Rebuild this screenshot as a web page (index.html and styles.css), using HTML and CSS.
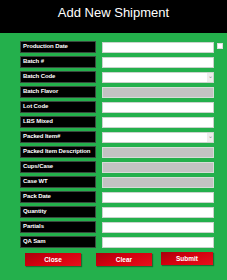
FILE: index.html
```html
<!DOCTYPE html>
<html>
<head>
<meta charset="utf-8">
<link rel="stylesheet" href="styles.css">
</head>
<body>
<header class="top">Add New Shipment</header>
<main class="panel">
  <div class="form">
    <div class="lbl">Production Date</div>
    <div class="fld"><input class="inp" type="text"><span class="cal"></span></div>
    <div class="lbl">Batch #</div>
    <div class="fld"><input class="inp" type="text"></div>
    <div class="lbl">Batch Code</div>
    <div class="fld"><div class="sel"><span class="arrow">&#8964;</span></div></div>
    <div class="lbl">Batch Flavor</div>
    <div class="fld"><input class="inp dis" type="text" disabled></div>
    <div class="lbl">Lot Code</div>
    <div class="fld"><input class="inp" type="text"></div>
    <div class="lbl">LBS Mixed</div>
    <div class="fld"><input class="inp" type="text"></div>
    <div class="lbl">Packed Item#</div>
    <div class="fld"><div class="sel"><span class="arrow">&#8964;</span></div></div>
    <div class="lbl">Packed Item Description</div>
    <div class="fld"><input class="inp dis" type="text" disabled></div>
    <div class="lbl">Cups/Case</div>
    <div class="fld"><input class="inp dis" type="text" disabled></div>
    <div class="lbl">Case WT</div>
    <div class="fld"><input class="inp dis" type="text" disabled></div>
    <div class="lbl">Pack Date</div>
    <div class="fld"><input class="inp" type="text"></div>
    <div class="lbl">Quantity</div>
    <div class="fld"><input class="inp" type="text"></div>
    <div class="lbl">Partials</div>
    <div class="fld"><input class="inp" type="text"></div>
    <div class="lbl">QA Sam</div>
    <div class="fld"><input class="inp" type="text"></div>
  </div>
  <div class="actions">
    <button class="btn b-close">Close</button>
    <button class="btn b-clear">Clear</button>
    <button class="btn b-submit">Submit</button>
  </div>
</main>
</body>
</html>
```

FILE: styles.css
```css
html, body {
  margin: 0;
  padding: 0;
  background: #24b04c;
  font-family: "Liberation Sans", Arial, sans-serif;
}
.top {
  height: 33px;
  background: #000;
  color: #fff;
  font-size: 13px;
  text-align: center;
  line-height: 26px;
  box-sizing: border-box;
}
.panel {
  background: #24b04c;
  height: 247px;
  padding-top: 8px;
  box-sizing: border-box;
}
.form {
  display: grid;
  grid-template-columns: 76px 112px;
  column-gap: 6px;
  row-gap: 3px;
  margin-left: 20px;
  grid-auto-rows: 12px;
}
.lbl {
  background: #000;
  color: #fff;
  font-size: 6px;
  font-weight: bold;
  line-height: 8px;
  padding-left: 2px;
  box-sizing: border-box;
  border: 1px solid #3a4a3e;
  white-space: nowrap;
  overflow: hidden;
  letter-spacing: -0.1px;
}
.fld {
  position: relative;
  display: flex;
  align-items: center;
}
.inp {
  display: block;
  width: 112px;
  height: 11px;
  margin: 1px 0 0 0;
  padding: 0;
  box-sizing: border-box;
  border: 1px solid #c9d3cb;
  background: #fff;
}
.inp.dis {
  background: #c3c3c3;
  border-color: #d6dcd7;
}
.sel {
  position: relative;
  width: 112px;
  height: 11px;
  margin-top: 1px;
  box-sizing: border-box;
  border: 1px solid #c9d3cb;
  background: #fff;
}
.arrow {
  position: absolute;
  right: 0;
  top: 0;
  width: 6px;
  height: 9px;
  background: #ececec;
  color: #888;
  font-size: 6px;
  line-height: 6px;
  text-align: center;
}
.cal {
  position: absolute;
  left: 115px;
  top: 2px;
  width: 4px;
  height: 4px;
  background: #fff;
  border: 1px solid #ddd;
  box-sizing: content-box;
}
.actions {
  display: flex;
  align-items: flex-start;
  padding-left: 25px;
  margin-top: 5px;
}
.btn {
  height: 13px;
  padding: 0;
  border: none;
  color: #fff;
  font-family: "Liberation Sans", Arial, sans-serif;
  font-size: 6.5px;
  font-weight: bold;
  background: linear-gradient(160deg, #a8000c 0%, #d4000f 45%, #e8101c 100%);
  box-shadow: 1px 1px 1px rgba(0,0,0,0.35);
}
.b-close { width: 56px; }
.b-clear { width: 56px; margin-left: 15px; }
.b-submit { width: 52px; margin-left: 9px; margin-top: -1px; }
```
